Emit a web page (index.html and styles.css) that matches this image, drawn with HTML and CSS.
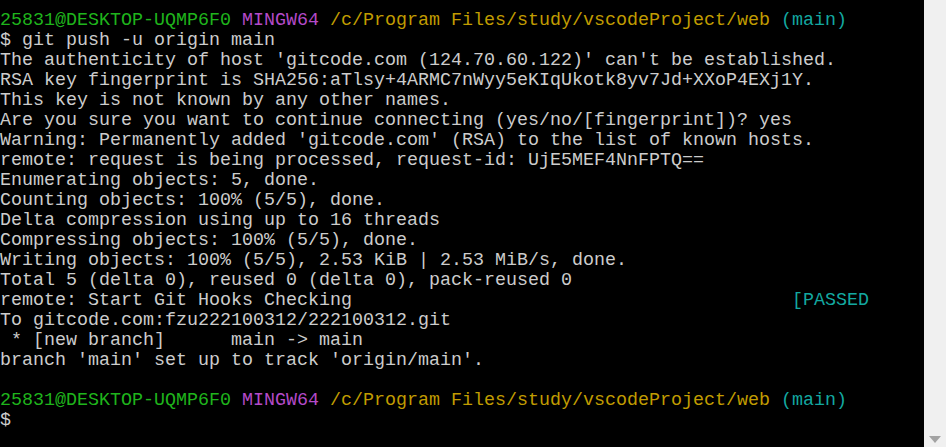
FILE: index.html
```html
<!DOCTYPE html>
<html>
<head>
<meta charset="utf-8">
<link rel="stylesheet" href="styles.css">
</head>
<body>
<div class="window">
  <div class="term">
    <div class="line"><span class="g">25831@DESKTOP-UQMP6F0</span> <span class="m">MINGW64</span> <span class="y">/c/Program Files/study/vscodeProject/web</span> <span class="c">(main)</span></div>
    <div class="line">$ git push -u origin main</div>
    <div class="line">The authenticity of host 'gitcode.com (124.70.60.122)' can't be established.</div>
    <div class="line">RSA key fingerprint is SHA256:aTlsy+4ARMC7nWyy5eKIqUkotk8yv7Jd+XXoP4EXj1Y.</div>
    <div class="line">This key is not known by any other names.</div>
    <div class="line">Are you sure you want to continue connecting (yes/no/[fingerprint])? yes</div>
    <div class="line">Warning: Permanently added 'gitcode.com' (RSA) to the list of known hosts.</div>
    <div class="line">remote: request is being processed, request-id: UjE5MEF4NnFPTQ==</div>
    <div class="line">Enumerating objects: 5, done.</div>
    <div class="line">Counting objects: 100% (5/5), done.</div>
    <div class="line">Delta compression using up to 16 threads</div>
    <div class="line">Compressing objects: 100% (5/5), done.</div>
    <div class="line">Writing objects: 100% (5/5), 2.53 KiB | 2.53 MiB/s, done.</div>
    <div class="line">Total 5 (delta 0), reused 0 (delta 0), pack-reused 0</div>
    <div class="line">remote: Start Git Hooks Checking                                        <span class="c">[PASSED</span></div>
    <div class="line">To gitcode.com:fzu222100312/222100312.git</div>
    <div class="line"> * [new branch]      main -&gt; main</div>
    <div class="line">branch 'main' set up to track 'origin/main'.</div>
    <div class="line"> </div>
    <div class="line"><span class="g">25831@DESKTOP-UQMP6F0</span> <span class="m">MINGW64</span> <span class="y">/c/Program Files/study/vscodeProject/web</span> <span class="c">(main)</span></div>
    <div class="line">$</div>
  </div>
  <div class="scrollbar">
    <div class="arrow"></div>
  </div>
</div>
</body>
</html>
```
FILE: styles.css
```css
html, body {
  margin: 0;
  padding: 0;
  background: #000;
}
.window {
  display: flex;
  width: 946px;
  height: 447px;
  overflow: hidden;
}
.term {
  flex: 1;
  background: #000;
  color: #cccccc;
  font-family: "Liberation Mono", monospace;
  font-size: 18.33px;
  line-height: 20px;
  padding-top: 11px;
  padding-left: 0;
  overflow: hidden;
}
.line {
  white-space: pre;
  height: 20px;
}
.g { color: #1fb41c; }
.m { color: #b44ac8; }
.y { color: #c19c00; }
.c { color: #13a8a0; }
.scrollbar {
  width: 22px;
  background: #f0f0f0;
  display: flex;
  flex-direction: column;
  justify-content: flex-end;
  align-items: center;
  padding-bottom: 4px;
  box-sizing: border-box;
}
.arrow {
  width: 0;
  height: 0;
  border-left: 6px solid transparent;
  border-right: 6px solid transparent;
  border-top: 7px solid #a3a3a3;
}
```
